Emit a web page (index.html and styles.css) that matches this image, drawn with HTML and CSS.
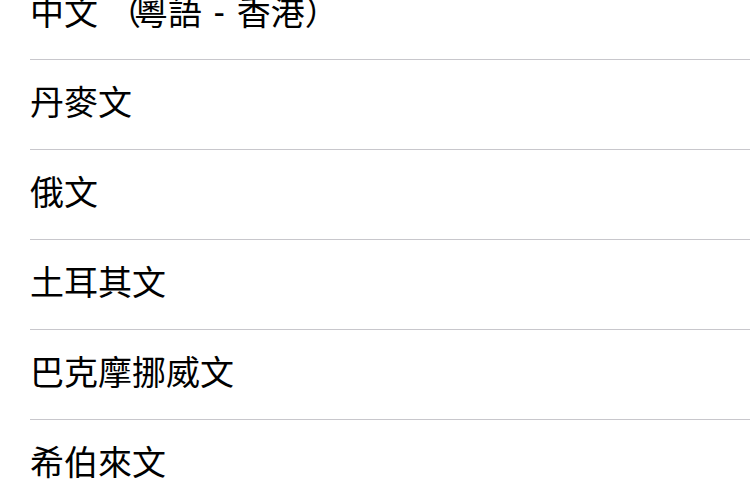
FILE: index.html
```html
<!DOCTYPE html>
<html lang="zh-Hant">
<head>
<meta charset="utf-8">
<link rel="stylesheet" href="styles.css">
</head>
<body>
<ul class="list">
  <li class="row">中文<span class="paren-open">（</span>粵語<span class="dash"> - </span>香港<span class="paren-close">）</span></li>
  <li class="row">丹麥文</li>
  <li class="row">俄文</li>
  <li class="row">土耳其文</li>
  <li class="row">巴克摩挪威文</li>
  <li class="row">希伯來文</li>
</ul>
</body>
</html>
```
FILE: styles.css
```css
html, body {
  margin: 0;
  padding: 0;
  background: #ffffff;
  overflow: hidden;
}
.list {
  list-style: none;
  margin: -30px 0 0 0;
  padding: 0 0 0 30px;
}
.row {
  height: 82px;
  padding-bottom: 7px;
  border-bottom: 1px solid #c8c7cc;
  display: flex;
  align-items: center;
  font-family: "Noto Sans CJK TC", "Noto Sans", sans-serif;
  font-size: 34px;
  line-height: 40px;
  color: #000000;
  white-space: nowrap;
}
.paren-open {
  margin-left: 9px;
  margin-right: -7px;
}
.dash {
  font-family: "Noto Sans", sans-serif;
  white-space: pre;
  padding: 0 3px;
}
```
